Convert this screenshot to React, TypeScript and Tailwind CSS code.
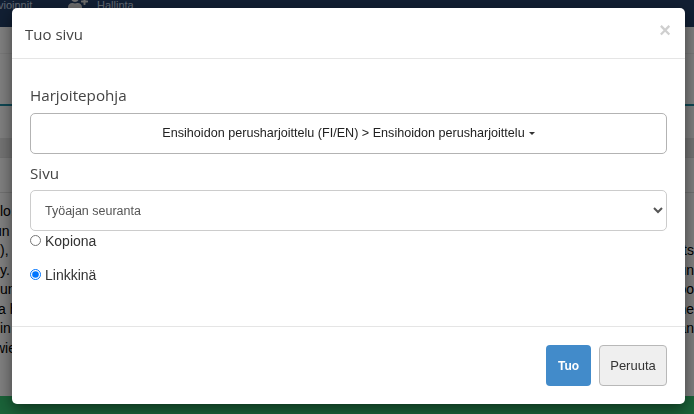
import { FaUserPlus } from 'react-icons/fa';

const textRows = [
  { left: 'lo,', right: '', shift: '' },
  { left: 'un', right: '', shift: '-ml-[6px]' },
  { left: '),', right: 'ts', shift: '' },
  { left: 'y.', right: 'un', shift: '' },
  { left: 'un', right: 'oo', shift: '' },
  { left: 'a h', right: 'ne', shift: '-ml-[2px]' },
  { left: 'in', right: 'an', shift: '' },
  { left: 'wie', right: '', shift: '-ml-[5px]' },
];

const Page = () => (
  <div className="flex h-[414px] flex-col overflow-hidden bg-white font-['Liberation_Sans',sans-serif]">
    {/* Yläpalkki */}
    <div className="flex h-[27px] shrink-0 items-start overflow-hidden bg-[#233e66] text-[11px] text-[#c4d2e4]">
      <span className="-ml-[13px] -mt-[3px] w-[46px] shrink-0 whitespace-nowrap">Arvioinnit</span>
      <FaUserPlus className="-mt-[8px] ml-[35px] shrink-0 text-[#d8d8d8]" size={20} />
      <span className="-mt-[3px] ml-[9px]">Hallinta</span>
    </div>

    <div className="h-[27px] shrink-0 border-b border-[#f0f0f0]" />
    <div className="h-[52px] shrink-0 border-b-2 border-[#1e8ea6]" />
    <div className="h-[32px] shrink-0" />
    <div className="h-[20px] shrink-0 border-b border-[#e0e0e0] bg-[#e6e6e6]" />
    <div className="h-[35px] shrink-0 border-b border-[#e0e0e0]" />

    {/* Sisältöteksti */}
    <div className="flex-1 pt-[9px] text-[14px] leading-[19.5px] text-black">
      {textRows.map((row, i) => (
        <div key={i} className="flex h-[19.5px] justify-between">
          <span className={row.shift}>{row.left}</span>
          <span>{row.right}</span>
        </div>
      ))}
    </div>

    <div className="h-[18px] shrink-0 bg-[#35c672]" />
  </div>
);

const Modal = () => (
  <div className="ml-[12px] mt-[8px] flex h-[396px] w-[673px] flex-col rounded-[5px] bg-white shadow-[0_5px_15px_rgba(0,0,0,0.5)]">
    <div className="flex h-[51px] shrink-0 items-center justify-between border-b border-[#e5e5e5] pl-[13px] pr-[14px]">
      <h4 className="pt-[2px] font-['Open_Sans',sans-serif] text-[15px] text-[#444]">Tuo sivu</h4>
      <span className="mb-[7px] font-['Liberation_Sans',sans-serif] text-[20px] font-bold text-[#cfcfcf]">×</span>
    </div>

    <div className="flex-1 px-[18px] pt-[24px] font-['Liberation_Sans',sans-serif]">
      <label className="block font-['Open_Sans',sans-serif] text-[15.2px] leading-[24px] text-[#444]">Harjoitepohja</label>
      <button className="mt-[6px] flex h-[41px] w-full items-center justify-center rounded-[5px] border border-[#b3b3b3] bg-white text-[12.6px] text-[#222]">
        Ensihoidon perusharjoittelu (FI/EN) &gt; Ensihoidon perusharjoittelu
        <span className="ml-[4px] border-x-[3px] border-t-[3px] border-x-transparent border-t-[#333]" />
      </button>

      <label className="mt-[7px] block font-['Open_Sans',sans-serif] text-[15.2px] leading-[24px] text-[#444]">Sivu</label>
      <select className="mt-[5px] block h-[41px] w-full rounded-[5px] border border-[#ccc] bg-white px-[10px] text-[12.5px] text-[#555]">
        <option>Työajan seuranta</option>
      </select>

      <label className="flex h-[20px] items-center text-[14px] text-[#333]">
        <input type="radio" name="tapa" className="m-0 mb-[2px] mr-[4px] h-[11px] w-[11px]" />
        Kopiona
      </label>
      <label className="mt-[14px] flex h-[20px] items-center text-[14px] text-[#333]">
        <input type="radio" name="tapa" defaultChecked className="m-0 mb-[2px] mr-[4px] h-[11px] w-[11px]" />
        Linkkinä
      </label>
    </div>

    <div className="flex h-[78px] shrink-0 items-center justify-end gap-[8px] border-t border-[#e5e5e5] pr-[18px] font-['Liberation_Sans',sans-serif] text-[13px]">
      <button className="h-[41px] w-[45px] rounded-[4px] bg-[#428bca] text-[12px] font-bold text-white">Tuo</button>
      <button className="h-[41px] w-[68px] rounded-[4px] border border-[#b8b8b8] bg-[#efefef] text-[#333]">Peruuta</button>
    </div>
  </div>
);

export default function App() {
  return (
    <div className="relative h-[414px] w-[694px] overflow-hidden">
      <Page />
      <div className="fixed inset-0 bg-black/50">
        <Modal />
      </div>
    </div>
  );
}
